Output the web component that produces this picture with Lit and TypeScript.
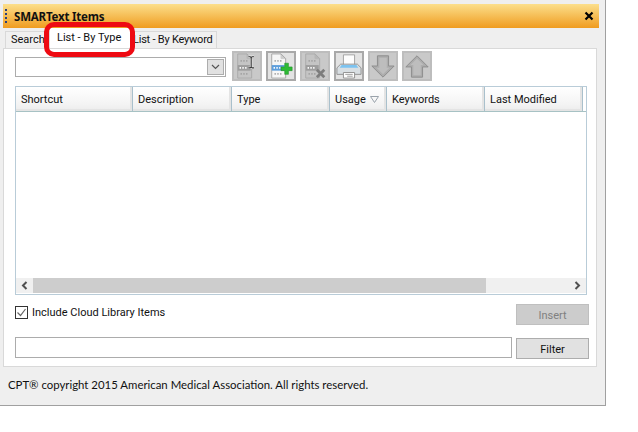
import { LitElement, html, css, svg } from 'lit';
import { customElement } from 'lit/decorators.js';

const columns = [
  { label: 'Shortcut', width: 117 },
  { label: 'Description', width: 99 },
  { label: 'Type', width: 98 },
  { label: 'Usage', width: 57, sorted: true },
  { label: 'Keywords', width: 98 },
  { label: 'Last Modified', width: 98 },
];

// small document with the three "TCB" rows, used by the first three buttons
const doc = (paper: string, line: string, hi: string, ink: string) => svg`
  <path d="M4 1h10l5 5v21H4z" fill="${paper}" stroke="${line}" />
  <path d="M14 1v5h5" fill="${line}" opacity=".5" stroke="${line}" />
  <path d="M7 8.5h1.5M10 8.5h1.5M13 8.5h1.5M7 22.5h1.5M10 22.5h1.5M13 22.5h1.5" stroke="${ink}" stroke-width="2" />
  <rect x="4" y="13" width="14" height="6" fill="${hi}" />
  <path d="M6 16h1.5M9 16h1.5M12 16h1.5" stroke="#fff" stroke-width="2" />
`;

const icons = {
  cursor: svg`
    ${doc('#c4c4c4', '#aaaaaa', '#9d9d9d', '#a2a2a2')}
    <path d="M15.5 4h2l1 1 1-1h2M18.5 5v10M15.5 16h2l1-1 1 1h2" fill="none" stroke="#eee" stroke-width="2.6" />
    <path d="M15.5 4h2l1 1 1-1h2M18.5 5v10M15.5 16h2l1-1 1 1h2" fill="none" stroke="#333" stroke-width="1.2" />
  `,
  add: svg`
    ${doc('#f6f6f6', '#a4a4a4', '#5f9fdc', '#a8a8a8')}
    <path d="M18 11h4v4h4v4h-4v4h-4v-4h-4v-4h4z" fill="#2dbb35" stroke="#1f8f27" stroke-width=".6" />
  `,
  remove: svg`
    ${doc('#c4c4c4', '#aaaaaa', '#9d9d9d', '#a2a2a2')}
    <path d="M16 18l8 8M24 18l-8 8" stroke="#7d7d7d" stroke-width="3" />
  `,
  print: svg`
    <path d="M8 2h12v12H8z" fill="#fdfdfd" stroke="#a0a0a0" />
    <path d="M5 12h18l4 4v7H1v-7z" fill="#d9dfe3" stroke="#8f8f8f" />
    <path d="M6 13h16l2 3H4z" fill="#7cc3f0" />
    <path d="M8 21h12v6H8z" fill="#fff" stroke="#8f8f8f" />
    <path d="M10 23h8M12 25h6" stroke="#999" />
  `,
  down: svg`
    <path d="M8 3h12v11h6L14 26 2 14h6z" fill="#adadad" stroke="#8a8a8a" />
    <path d="M10 5h8v11h3l-7 7-7-7h3z" fill="#bdbdbd" />
  `,
  up: svg`
    <path d="M8 26h12V15h6L14 3 2 15h6z" fill="#adadad" stroke="#8a8a8a" />
    <path d="M10 24h8V13h3l-7-7-7 7h3z" fill="#bdbdbd" />
  `,
};

const tools = [
  { icon: icons.cursor, on: false },
  { icon: icons.add, on: true },
  { icon: icons.remove, on: false },
  { icon: icons.print, on: true },
  { icon: icons.down, on: false },
  { icon: icons.up, on: false },
];

@customElement('app-root')
export class AppRoot extends LitElement {
  static styles = css`
    :host {
      display: block;
      width: 638px;
      height: 432px;
      background: #fff;
      font-family: 'Roboto', 'Noto Sans', sans-serif;
      font-size: 11px;
      color: #111;
    }
    .window {
      position: relative;
      box-sizing: border-box;
      width: 606px;
      height: 406px;
      padding: 4px 0 0 3px;
      background: #efefef;
      border-right: 1px solid #a0a0a0;
      border-bottom: 1px solid #a0a0a0;
    }
    .title {
      display: flex;
      align-items: center;
      box-sizing: border-box;
      width: 596px;
      height: 24px;
      padding: 0 5px 0 2px;
      background: linear-gradient(#fcdf8c, #f09c20);
      font-family: 'Noto Sans', sans-serif;
      font-weight: 700;
      font-size: 11.5px;
      letter-spacing: -0.2px;
    }
    .grip {
      width: 2px;
      height: 15px;
      margin-right: 7px;
      background: repeating-linear-gradient(#2a3f7c 0 2px, transparent 2px 4px);
    }
    .title span {
      flex: 1;
    }
    .close {
      display: block;
    }
    .tabs {
      display: flex;
      align-items: flex-end;
      height: 20px;
      padding-left: 2px;
    }
    .tab {
      box-sizing: border-box;
      height: 17px;
      padding: 0 5px;
      line-height: 16px;
      background: #f0f0f0;
      border: 1px solid #d9d9d9;
      border-bottom: none;
      white-space: nowrap;
    }
    .tab.search {
      width: 45px;
    }
    .tab.active {
      width: 80px;
      height: 20px;
      padding: 0 0 0 7px;
      line-height: 20px;
      background: #fff;
      border: none;
    }
    .tab.keyword {
      width: 87px;
      padding-left: 2px;
      letter-spacing: -0.02em;
    }
    .panel {
      box-sizing: border-box;
      display: flex;
      flex-direction: column;
      width: 594px;
      height: 319px;
      padding: 8px 9px 0 11px;
      background: #fff;
      border: 1px solid #d9d9d9;
    }
    .toolbar {
      display: flex;
      align-items: flex-start;
      height: 29px;
    }
    .combo {
      box-sizing: border-box;
      display: flex;
      justify-content: flex-end;
      align-items: center;
      width: 211px;
      height: 20px;
      margin-right: 6px;
      border: 1px solid #acacac;
    }
    .combo i {
      box-sizing: border-box;
      display: flex;
      align-items: center;
      justify-content: center;
      width: 17px;
      height: 16px;
      margin-right: 1px;
      background: #e1e1e1;
      border: 1px solid #adadad;
    }
    .tool {
      box-sizing: border-box;
      display: flex;
      align-items: center;
      justify-content: center;
      width: 30px;
      height: 30px;
      margin-right: 4px;
      margin-top: -6px;
      background: #c9c9c9;
      border: 2px solid #bdbdbd;
    }
    .tool.on {
      background: #e3e3e3;
      border-color: #a9a9a9;
    }
    .grid {
      box-sizing: border-box;
      display: flex;
      flex-direction: column;
      width: 572px;
      height: 209px;
      border: 1px solid #b9ccd8;
    }
    .head {
      display: flex;
      height: 24px;
      border-bottom: 1px solid #a7c2c4;
    }
    .col {
      box-sizing: border-box;
      display: flex;
      align-items: center;
      justify-content: space-between;
      padding: 0 5px;
      background: linear-gradient(#ffffff, #f4f4f4 70%, #ececec);
      border-right: 1px solid #a9c0cc;
      box-shadow: inset -2px -2px 0 #e4e4e4;
    }
    .col svg {
      margin-right: 2px;
    }
    .body {
      flex: 1;
    }
    .scroll {
      display: flex;
      align-items: center;
      height: 15px;
      margin-bottom: 1px;
      background: #f0f0f0;
    }
    .arrow {
      display: flex;
      align-items: center;
      justify-content: center;
      width: 17px;
    }
    .track {
      flex: 1;
    }
    .thumb {
      width: 453px;
      height: 15px;
      background: #cdcdcd;
    }
    .row {
      display: flex;
      justify-content: space-between;
      align-items: flex-start;
      width: 574px;
    }
    .include {
      height: 33px;
      padding-top: 9px;
    }
    .check {
      display: flex;
      align-items: center;
      gap: 4px;
      margin-top: 2px;
      line-height: 13px;
    }
    .box {
      display: block;
    }
    button {
      box-sizing: border-box;
      width: 73px;
      height: 21px;
      padding: 1px 0 0;
      font: inherit;
      color: #111;
      background: #e1e1e1;
      border: 1px solid #adadad;
    }
    button[disabled] {
      color: #808080;
      background: #cccccc;
      border-color: #bfbfbf;
    }
    input {
      box-sizing: border-box;
      width: 497px;
      height: 21px;
      margin: 0;
      background: #fff;
      border: 1px solid #acacac;
    }
    .filter-row button {
      margin-top: 1px;
    }
    .cpt {
      padding: 10px 0 0 5px;
      font-family: 'Lato', sans-serif;
      font-size: 11.4px;
      line-height: 16px;
    }
    .callout {
      position: absolute;
      left: 44px;
      top: 22px;
      box-sizing: border-box;
      width: 91px;
      height: 35px;
      border: 5px solid #ee0a12;
      border-radius: 10px;
      pointer-events: none;
    }
  `;

  render() {
    return html`
      <div class="window">
        <div class="title">
          <div class="grip"></div>
          <span>SMARText Items</span>
          <svg class="close" width="10" height="10" viewBox="0 0 10 10">
            <path d="M1.5 1.5l7 7M8.5 1.5l-7 7" stroke="#000" stroke-width="2.2" />
          </svg>
        </div>
        <div class="tabs">
          <div class="tab search">Search</div>
          <div class="tab active">List - By Type</div>
          <div class="tab keyword">List - By Keyword</div>
        </div>
        <div class="panel">
          <div class="toolbar">
            <div class="combo">
              <i>
                <svg width="9" height="6" viewBox="0 0 9 6">
                  <path d="M1 1l3.5 3.5L8 1" fill="none" stroke="#555" stroke-width="1.2" />
                </svg>
              </i>
            </div>
            ${tools.map(
              (t) => html`
                <div class="tool ${t.on ? 'on' : ''}">
                  <svg width="26" height="26" viewBox="0 0 28 28">${t.icon}</svg>
                </div>
              `
            )}
          </div>
          <div class="grid">
            <div class="head">
              ${columns.map(
                (c) => html`
                  <div class="col" style="width:${c.width}px">
                    ${c.label}
                    ${c.sorted
                      ? html`<svg width="9" height="7" viewBox="0 0 9 7">
                          <path d="M.5.5h8L4.5 6.5z" fill="none" stroke="#9aa3ab" />
                        </svg>`
                      : ''}
                  </div>
                `
              )}
            </div>
            <div class="body"></div>
            <div class="scroll">
              <div class="arrow">
                <svg width="7" height="9" viewBox="0 0 7 9">
                  <path d="M5.5 1L2 4.5 5.5 8" fill="none" stroke="#505050" stroke-width="2" />
                </svg>
              </div>
              <div class="track"><div class="thumb"></div></div>
              <div class="arrow">
                <svg width="7" height="9" viewBox="0 0 7 9">
                  <path d="M1.5 1L5 4.5 1.5 8" fill="none" stroke="#505050" stroke-width="2" />
                </svg>
              </div>
            </div>
          </div>
          <div class="row include">
            <label class="check">
              <svg class="box" width="13" height="13" viewBox="0 0 13 13">
                <rect x=".5" y=".5" width="12" height="12" fill="#fff" stroke="#333" />
                <path d="M2.5 6.5l3 3 5-6.5" fill="none" stroke="#666" stroke-width="1.2" />
              </svg>
              Include Cloud Library Items
            </label>
            <button disabled>Insert</button>
          </div>
          <div class="row filter-row">
            <input type="text" />
            <button>Filter</button>
          </div>
        </div>
        <div class="cpt">CPT® copyright 2015 American Medical Association. All rights reserved.</div>
        <div class="callout"></div>
      </div>
    `;
  }
}
